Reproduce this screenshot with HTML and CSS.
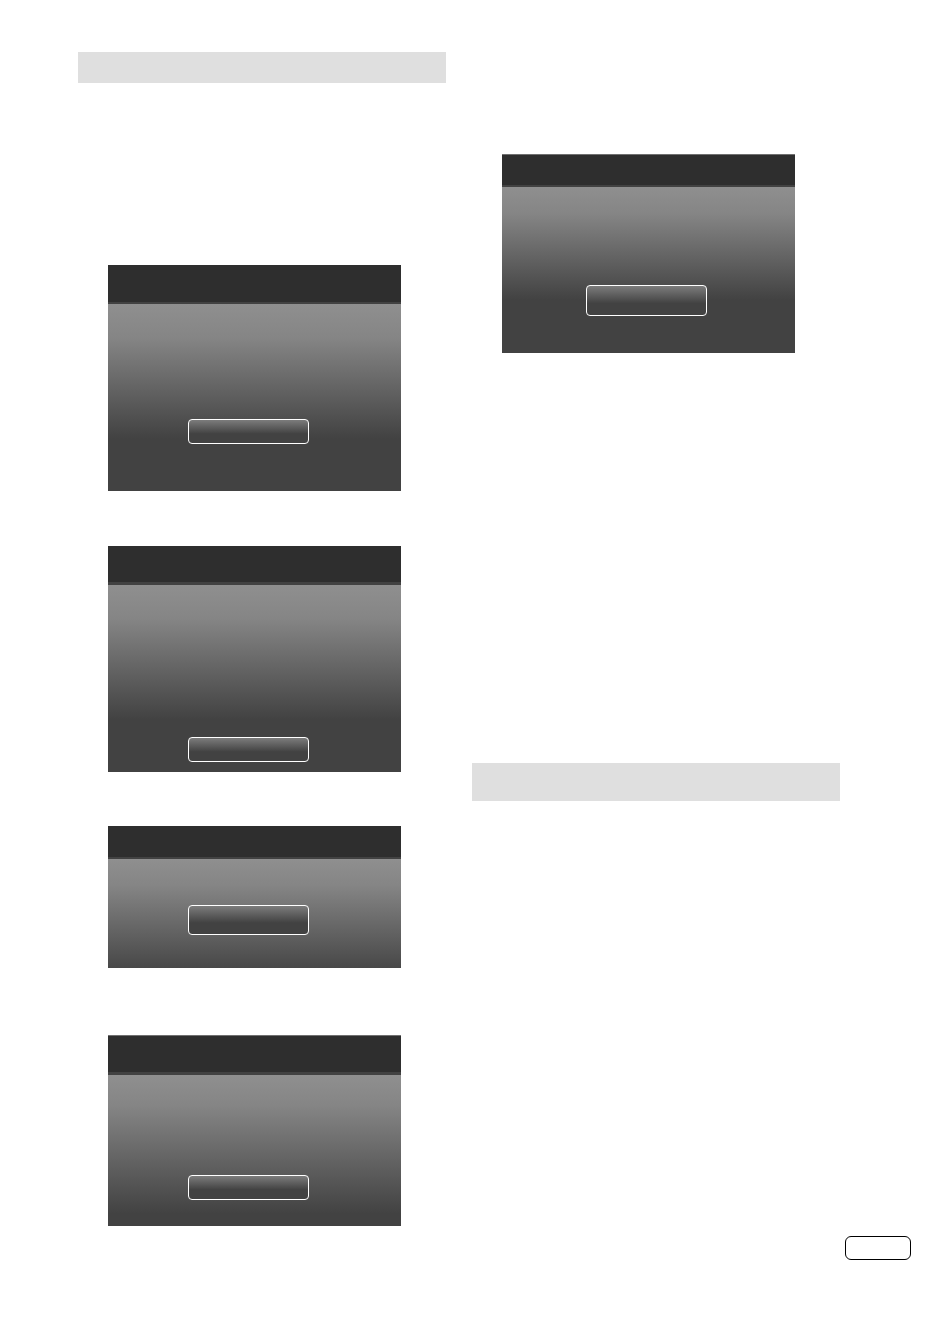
FILE: index.html
```html
<!DOCTYPE html>
<html lang="en">
<head>
    <meta charset="UTF-8">
    <meta name="viewport" content="width=device-width, initial-scale=1.0">
    <title>Setup Screens</title>
    <link rel="stylesheet" href="styles.css">
</head>
<body>
    <main class="columns">
        <section class="column">
            <div class="heading"></div>
            <div class="screen screen-start">
                <div class="screen-title"></div>
                <div class="screen-body">
                    <button type="button" class="screen-button" aria-label="Start"></button>
                </div>
            </div>
            <div class="screen screen-notice">
                <div class="screen-title"></div>
                <div class="screen-body">
                    <button type="button" class="screen-button" aria-label="Next"></button>
                </div>
            </div>
            <div class="screen screen-short">
                <div class="screen-title"></div>
                <div class="screen-body">
                    <button type="button" class="screen-button tall" aria-label="Select"></button>
                </div>
            </div>
            <div class="screen screen-confirm">
                <div class="screen-title"></div>
                <div class="screen-body">
                    <button type="button" class="screen-button" aria-label="Confirm"></button>
                </div>
            </div>
        </section>

        <section class="column">
            <div class="screen screen-finish">
                <div class="screen-title"></div>
                <div class="screen-body">
                    <button type="button" class="screen-button tall" aria-label="Finish"></button>
                </div>
            </div>
            <div class="heading heading-tall"></div>
        </section>
    </main>

    <footer class="footer">
        <div class="page-number"></div>
    </footer>
</body>
</html>
```
FILE: styles.css
```css
* {
    box-sizing: border-box;
}
body {
    margin: 0;
    background-color: white;
    font-family: "Liberation Sans", Arial, sans-serif;
}
.columns {
    display: grid;
    grid-template-columns: 1fr 1fr;
    gap: 26px;
    padding: 52px 93px 0 78px;
}
.column {
    display: flex;
    flex-direction: column;
}
.heading {
    height: 31px;
    background-color: #dfdfdf;
}
.heading-tall {
    height: 38px;
    margin-top: 410px;
}

/* Screens */
.screen {
    margin: 0 45px 0 30px;
}
.screen-title {
    height: 39px;
    background-color: #2e2e2e;
    border-bottom: 2px solid #424242;
}
.screen-body {
    padding-left: 80px;
    background: linear-gradient(#8f8f8f, #858585 18%, #424242 72%);
}
.screen-button {
    display: block;
    width: 121px;
    height: 25px;
    padding: 0;
    border: 1px solid white;
    border-radius: 4px;
    background: linear-gradient(#7c7c7c, #424242 60%);
    cursor: pointer;
}
.screen-button.tall {
    height: 30px;
}

.screen-start {
    margin-top: 182px;
}
.screen-start .screen-body {
    padding-top: 115px;
    padding-bottom: 47px;
}
.screen-notice {
    margin-top: 55px;
}
.screen-notice .screen-title {
    border-bottom-width: 3px;
}
.screen-notice .screen-body {
    padding-top: 152px;
    padding-bottom: 10px;
}
.screen-short {
    margin-top: 54px;
}
.screen-short .screen-title {
    height: 33px;
}
.screen-short .screen-body {
    padding-top: 46px;
    padding-bottom: 33px;
    background: linear-gradient(#8f8f8f, #858585 24%, #484848);
}
.screen-confirm {
    margin-top: 67px;
}
.screen-confirm .screen-title {
    height: 40px;
    border-top: 1px solid #707070;
    border-bottom-width: 3px;
}
.screen-confirm .screen-body {
    padding-top: 100px;
    padding-bottom: 26px;
    background: linear-gradient(#8f8f8f, #858585 20%, #424242 92%);
}
.screen-finish {
    margin-top: 102px;
}
.screen-finish .screen-title {
    height: 33px;
    border-top: 1px solid #707070;
}
.screen-finish .screen-body {
    padding: 98px 0 37px 84px;
    background: linear-gradient(#8f8f8f, #858585 16%, #424242 68%);
}
.screen-finish .screen-button {
    height: 31px;
}

.footer {
    display: flex;
    justify-content: flex-end;
    padding: 10px 22px 57px;
}
.page-number {
    width: 66px;
    height: 24px;
    border: 1px solid black;
    border-radius: 6px;
}
```
